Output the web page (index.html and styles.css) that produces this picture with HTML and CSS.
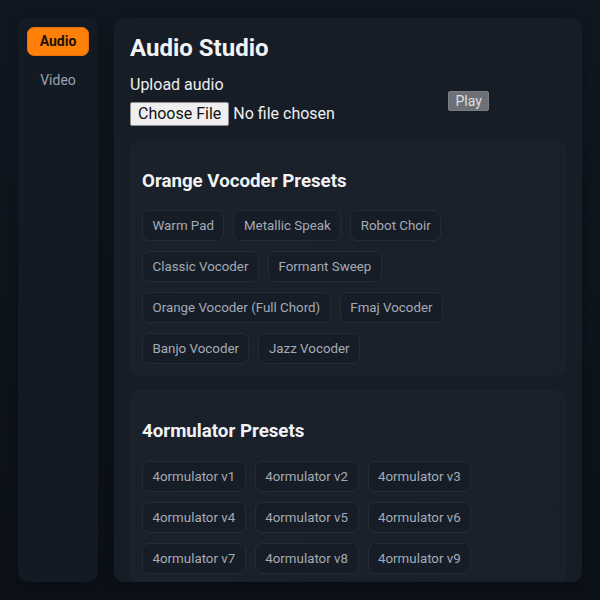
FILE: index.html
```html
<!DOCTYPE html>
<html lang="en">
<head>
<meta charset="utf-8">
<title>Audio Studio</title>
<link rel="stylesheet" href="styles.css">
</head>
<body>
<div class="app">
  <nav class="sidebar">
    <button class="nav-item active">Audio</button>
    <button class="nav-item">Video</button>
  </nav>
  <main class="main">
    <h1 class="title">Audio Studio</h1>
    <div class="upload-row">
      <div class="upload">
        <label class="upload-label">Upload audio</label>
        <input class="file" type="file">
      </div>
      <button class="play">Play</button>
    </div>
    <section class="card">
      <h3 class="card-title">Orange Vocoder Presets</h3>
      <div class="chips">
        <button class="chip">Warm Pad</button>
        <button class="chip">Metallic Speak</button>
        <button class="chip">Robot Choir</button>
        <button class="chip">Classic Vocoder</button>
        <button class="chip">Formant Sweep</button>
        <button class="chip">Orange Vocoder (Full Chord)</button>
        <button class="chip">Fmaj Vocoder</button>
        <button class="chip">Banjo Vocoder</button>
        <button class="chip">Jazz Vocoder</button>
      </div>
    </section>
    <section class="card">
      <h3 class="card-title">4ormulator Presets</h3>
      <div class="chips">
        <button class="chip">4ormulator v1</button>
        <button class="chip">4ormulator v2</button>
        <button class="chip">4ormulator v3</button>
        <button class="chip">4ormulator v4</button>
        <button class="chip">4ormulator v5</button>
        <button class="chip">4ormulator v6</button>
        <button class="chip">4ormulator v7</button>
        <button class="chip">4ormulator v8</button>
        <button class="chip">4ormulator v9</button>
      </div>
    </section>
  </main>
</div>
</body>
</html>
```
FILE: styles.css
```css
* { box-sizing: border-box; }
html, body { height: 100%; }
body {
  margin: 0;
  background: linear-gradient(180deg, #111720 0%, #0c1119 100%);
  font-family: Roboto, "Liberation Sans", sans-serif;
  color: #e8eaed;
  overflow: hidden;
}
.app {
  display: flex;
  gap: 16px;
  padding: 18px;
  height: 100vh;
}
.sidebar {
  width: 80px;
  flex: none;
  background: #141a23;
  border-radius: 10px;
  padding: 9px;
  display: flex;
  flex-direction: column;
  gap: 10px;
  box-shadow: 0 4px 14px rgba(0,0,0,0.25);
}
.nav-item {
  font-family: inherit;
  font-size: 14px;
  line-height: 17px;
  padding: 5px 0;
  border: 1px solid transparent;
  border-radius: 7px;
  background: transparent;
  color: #9aa2ad;
  text-align: center;
}
.nav-item.active {
  background: #ff8008;
  color: #1b1205;
  font-weight: 700;
  border-color: #e8720a;
}
.main {
  flex: 1;
  background: #171d26;
  border-radius: 10px;
  padding: 16px 16px 0;
  overflow: hidden;
  box-shadow: 0 4px 14px rgba(0,0,0,0.3);
}
.title {
  margin: 0;
  font-size: 24px;
  line-height: 28px;
  font-weight: 700;
  color: #f1f3f5;
}
.upload-row {
  display: flex;
  align-items: center;
  margin-top: 13px;
  margin-bottom: 14px;
}
.upload {
  display: flex;
  flex-direction: column;
  gap: 8px;
  width: 318px;
}
.upload-label {
  font-size: 16px;
  line-height: 19px;
  color: #eceef1;
}
.file {
  font-family: Roboto, "Liberation Sans", sans-serif;
  font-size: 16px;
  line-height: 20px;
  color: #eef0f2;
}
.file::file-selector-button {
  font-family: inherit;
  font-size: 16px;
  line-height: 20px;
  padding: 1px 7px;
  margin-right: 4px;
  background: #efefef;
  color: #111;
  border: 1px solid #8f8f8f;
  border-radius: 2px;
}
.play {
  font-family: inherit;
  font-size: 14px;
  line-height: 16px;
  padding: 1px 6.5px;
  background: #6d7177;
  color: #dcdfe2;
  border: 1px solid #7a7e84;
  border-radius: 2px;
}
.card {
  background: linear-gradient(90deg, #1a212b 0%, #19202a 100%);
  border: 1px solid #1c232d;
  border-radius: 10px;
  padding: 10px 11px 10px;
  margin-bottom: 15px;
}
.card-title {
  margin: 18.72px 0;
  font-size: 18.72px;
  line-height: 22px;
  font-weight: 700;
  color: #f1f3f5;
}
.chips {
  display: flex;
  flex-wrap: wrap;
  gap: 10px 9px;
}
.chip {
  font-family: inherit;
  font-size: 13.333px;
  line-height: 15px;
  padding: 7px 9.5px;
  background: #171d26;
  border: 1px solid #252c37;
  border-radius: 7px;
  color: #a3abb6;
}
```
